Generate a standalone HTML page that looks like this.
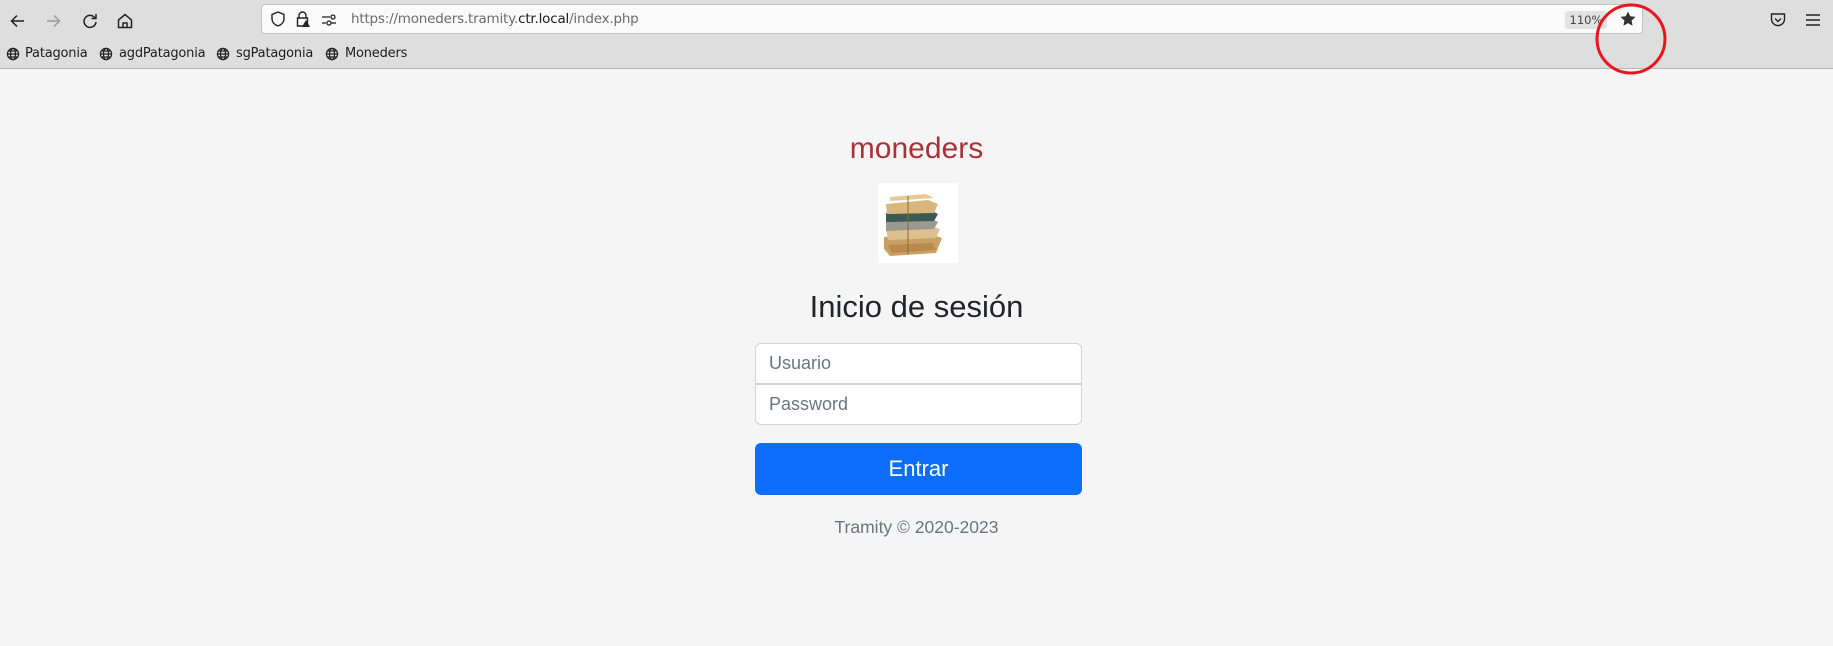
<!DOCTYPE html>
<html><head><meta charset="utf-8"><style>
*{margin:0;padding:0;box-sizing:border-box}
body{width:1833px;height:646px;background:#f5f5f5;font-family:"Liberation Sans",sans-serif;position:relative;overflow:hidden}
.chrome{position:absolute;left:0;top:0;width:1833px;height:69px;background:#dedede;border-bottom:1px solid #b8b8b8}
.ic{position:absolute}
.url{position:absolute;left:261px;top:4px;width:1382px;height:30px;background:#fafafa;border:1px solid #c4c4c4;border-radius:4px}
.urltext{position:absolute;left:89px;top:6px;font-family:"DejaVu Sans","Liberation Sans",sans-serif;font-size:13.5px;color:#6b6b6b;letter-spacing:-0.2px}
.urltext b{font-weight:normal;color:#1a1a1a}
.zoom{position:absolute;left:1303px;top:6px;width:42px;height:18px;background:#e2e2e2;border-radius:3px;font-family:"DejaVu Sans",sans-serif;font-size:11.5px;color:#444;text-align:center;line-height:18px}
.bm{position:absolute;top:46px;font-family:"DejaVu Sans","Liberation Sans",sans-serif;font-size:13px;color:#1d1d1d;letter-spacing:-0.2px}
.center{position:absolute;left:0;width:1833px;text-align:center}
.inp{position:absolute;left:755px;width:327px;height:41px;background:#fff;border:1px solid #ced4da;font-size:18px;color:#6c757d;padding-left:13px;line-height:39px}
</style></head><body>
<div class="chrome">
 <svg class="ic" style="left:8px;top:11px" width="20" height="20" viewBox="0 0 20 20" fill="none" stroke="#222" stroke-width="1.5"><path d="M16 10H4M9 4.5L3.5 10 9 15.5"/></svg>
 <svg class="ic" style="left:43px;top:11px" width="20" height="20" viewBox="0 0 20 20" fill="none" stroke="#9a9a9a" stroke-width="1.5"><path d="M4 10h12M11 4.5l5.5 5.5L11 15.5"/></svg>
 <svg class="ic" style="left:80px;top:11px" width="20" height="20" viewBox="0 0 20 20" fill="none" stroke="#222" stroke-width="1.5"><path d="M15 7A6 6 0 1 0 16 11"/><path d="M16 3v4.5h-4.5" /></svg>
 <svg class="ic" style="left:115px;top:11px" width="20" height="20" viewBox="0 0 20 20" fill="none" stroke="#222" stroke-width="1.5"><path d="M3.5 9L10 3.5 16.5 9V16.5H3.5Z"/><path d="M8 16.5v-4.5h4v4.5"/></svg>
 <div class="url">
  <svg class="ic" style="left:7px;top:5px" width="18" height="18" viewBox="0 0 18 18" fill="none" stroke="#222" stroke-width="1.4"><path d="M9 2L3 4.5v4C3 12.5 6 15 9 16c3-1 6-3.5 6-7.5v-4Z"/></svg>
  <svg class="ic" style="left:32px;top:5px" width="18" height="18" viewBox="0 0 18 18"><path d="M5 8V5.5a3.5 3.5 0 0 1 7 0V8M3.5 8h10v8h-10Z" fill="none" stroke="#222" stroke-width="1.4"/><path d="M12 10l4 7h-8z" fill="#222"/></svg>
  <svg class="ic" style="left:58px;top:6px" width="18" height="18" viewBox="0 0 18 18" fill="none" stroke="#222" stroke-width="1.3"><path d="M2 6h8M2 12h4"/><circle cx="13" cy="6" r="2"/><circle cx="9" cy="12" r="2"/><path d="M11 12h5"/></svg>
  <div class="urltext">https://moneders.tramity.<b>ctr.local</b>/index.php</div>
  <div class="zoom">110%</div>
  <svg class="ic" style="left:1357px;top:5px" width="18" height="18" viewBox="0 0 18 18"><path d="M9 1.5l2.3 4.8 5.2.6-3.9 3.6 1 5.2L9 13.1l-4.6 2.6 1-5.2-3.9-3.6 5.2-.6z" fill="#333"/></svg>
 </div>
 <svg class="ic" style="left:1768px;top:10px" width="20" height="20" viewBox="0 0 20 20" fill="none" stroke="#222" stroke-width="1.4"><path d="M3.5 4h13v5a6.5 6.5 0 0 1-13 0Z"/><path d="M7 8.5l3 3 3-3"/></svg>
 <svg class="ic" style="left:1803px;top:10px" width="20" height="20" viewBox="0 0 20 20" fill="none" stroke="#222" stroke-width="1.5"><path d="M3 5h14M3 10h14M3 15h14"/></svg>
 <svg class="ic" style="left:6px;top:47px" width="14" height="14" viewBox="0 0 14 14" fill="none" stroke="#222" stroke-width="1.2"><circle cx="7" cy="7" r="5.6"/><ellipse cx="7" cy="7" rx="2.5" ry="5.6"/><path d="M1.4 7h11.2M2.5 4h9M2.5 10h9"/></svg>
 <div class="bm" style="left:25px">Patagonia</div>
 <svg class="ic" style="left:99px;top:47px" width="14" height="14" viewBox="0 0 14 14" fill="none" stroke="#222" stroke-width="1.2"><circle cx="7" cy="7" r="5.6"/><ellipse cx="7" cy="7" rx="2.5" ry="5.6"/><path d="M1.4 7h11.2M2.5 4h9M2.5 10h9"/></svg>
 <div class="bm" style="left:119px">agdPatagonia</div>
 <svg class="ic" style="left:216px;top:47px" width="14" height="14" viewBox="0 0 14 14" fill="none" stroke="#222" stroke-width="1.2"><circle cx="7" cy="7" r="5.6"/><ellipse cx="7" cy="7" rx="2.5" ry="5.6"/><path d="M1.4 7h11.2M2.5 4h9M2.5 10h9"/></svg>
 <div class="bm" style="left:236px">sgPatagonia</div>
 <svg class="ic" style="left:325px;top:47px" width="14" height="14" viewBox="0 0 14 14" fill="none" stroke="#222" stroke-width="1.2"><circle cx="7" cy="7" r="5.6"/><ellipse cx="7" cy="7" rx="2.5" ry="5.6"/><path d="M1.4 7h11.2M2.5 4h9M2.5 10h9"/></svg>
 <div class="bm" style="left:345px">Moneders</div>
</div>
<svg style="position:absolute;left:1594px;top:2px" width="74" height="74" viewBox="0 0 74 74"><circle cx="37" cy="37" r="34" fill="none" stroke="#e8141e" stroke-width="3"/></svg>

<div class="center" style="top:132px;font-size:30px;color:#a83236">moneders</div>
<svg style="position:absolute;left:878px;top:183px" width="80" height="80" viewBox="0 0 80 80">
 <rect width="80" height="80" fill="#fff"/>
 <path d="M6 54l46-3 12 4-6 15-46 3-6-7z" fill="#c9a064"/>
 <path d="M8 46l44-3 10 3-4 9-48 2z" fill="#dcc08e"/>
 <path d="M8 38l44-3 8 4-4 7-48 2z" fill="#9a9890"/>
 <path d="M8 30l44-3 8 4-4 7-48 1z" fill="#3c5a55"/>
 <path d="M8 21l42-4 10 4-4 9-47 1z" fill="#d9b77c"/>
 <path d="M12 14l36-3 8 4-44 3z" fill="#e6c996"/>
 <path d="M10 62l44-2 4 7-44 3z" fill="#b88a4d"/>
 <path d="M30 13v58" stroke="#8a6a3a" stroke-width="1"/>
</svg>
<div class="center" style="top:289px;font-size:31px;color:#212529">Inicio de sesión</div>
<div class="inp" style="top:343px;border-radius:6px 6px 0 0">Usuario</div>
<div class="inp" style="top:384px;border-radius:0 0 6px 6px">Password</div>
<div style="position:absolute;left:755px;top:443px;width:327px;height:52px;background:#0d6efd;border-radius:6px;color:#fff;font-size:22px;text-align:center;line-height:52px">Entrar</div>
<div class="center" style="top:517px;font-size:17.5px;color:#6c757d">Tramity © 2020-2023</div>
</body></html>
